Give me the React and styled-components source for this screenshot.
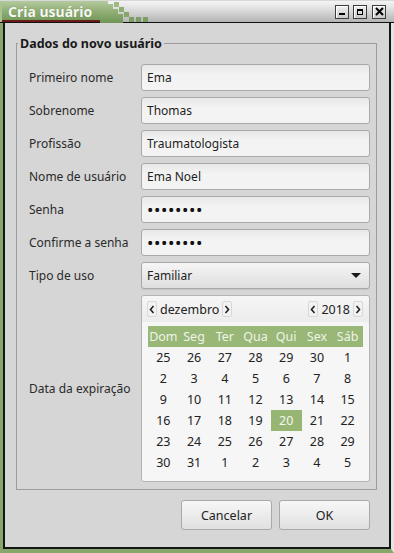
import React from "react";
import styled, { createGlobalStyle } from "styled-components";

const Global = createGlobalStyle`
  html, body { margin: 0; padding: 0; background: #d6d6d6; }
  body { font-family: "Noto Sans", "DejaVu Sans", sans-serif; font-size: 12px; color: #222; }
  * { box-sizing: border-box; }
`;

const Window = styled.div`
  width: 394px;
  height: 553px;
  display: flex;
  flex-direction: column;
  background: #d6d6d6;
  overflow: hidden;
`;

const TitleBar = styled.div`
  height: 23px;
  display: flex;
  align-items: stretch;
  background: linear-gradient(#f4f4f4 0%, #e4e4e4 30%, #b4b4b4 100%);
  border-top: 1px solid #d8d8d8;
  border-bottom: 1px solid #111;
`;

const TitleTab = styled.div`
  width: 100px;
  display: flex;
  align-items: center;
  padding-left: 6px;
  background: linear-gradient(#b4ca9f 0%, #93b078 45%, #6f9655 100%);
  border-left: 2px solid #a9c393;
  box-shadow: inset 0 -2px 0 #6a1c18;
  color: #f6f8f3;
  font-weight: 700;
  font-size: 14px;
  text-shadow: 0 0 1px rgba(40, 60, 30, 0.4);
`;

const Stairs = styled.svg`
  width: 50px;
  height: 22px;
  flex: none;
`;

const TitleSpacer = styled.div`
  flex: 1;
`;

const WinButtons = styled.div`
  display: flex;
  align-items: center;
  gap: 4px;
  padding-right: 8px;
`;

const WinBtn = styled.div`
  width: 14px;
  height: 14px;
  display: flex;
  align-items: center;
  justify-content: center;
  border: 1px solid #3c3c3c;
  background: linear-gradient(#f0f0f0, #c9c9c9);
  box-shadow: inset 1px 1px 0 #fff;
  margin-left: ${(p) => p.$gap || 0}px;
`;

const Frame = styled.div`
  flex: 1;
  display: flex;
  border-left: 3px solid #86a66c;
  border-bottom: 4px solid #86a66c;
  border-right: 3px solid #e4e4e4;
`;

const Body = styled.div`
  flex: 1;
  display: flex;
  flex-direction: column;
  border-left: 2px solid #151515;
  border-right: 2px solid #151515;
  border-bottom: 2px solid #151515;
  padding: 12px 12px 0 11px;
  background: #d6d6d6;
`;

const Group = styled.fieldset`
  margin: 0;
  border: 1px solid #9c9c9c;
  padding: 12px 6px 7px 12px;
  min-width: 0;
`;

const Legend = styled.legend`
  margin-left: -11px;
  padding: 0 2px;
  font-weight: 700;
  font-size: 12.5px;
  line-height: 17px;
  color: #1a1a1a;
`;

const FormGrid = styled.div`
  display: grid;
  grid-template-columns: 112px 1fr;
  row-gap: 6px;
  align-items: center;
`;

const Label = styled.div`
  font-size: 12px;
  color: #2a2a2a;
`;

const Input = styled.div`
  height: 27px;
  display: flex;
  align-items: center;
  padding-left: 5px;
  border: 1px solid #a9a9a9;
  border-radius: 3px;
  background: linear-gradient(#e8e8e8, #f3f3f3 40%, #f3f3f3);
  font-size: 12px;
  color: #1e1e1e;
`;

const Dots = styled.span`
  font-size: 17px;
  letter-spacing: 0.6px;
  color: #111;
  line-height: 1;
`;

const Combo = styled(Input)`
  justify-content: space-between;
  padding-right: 8px;
  background: linear-gradient(#f6f6f6, #dedede);
  box-shadow: 0 1px 0 rgba(0,0,0,0.08);
`;

const Arrow = styled.div`
  width: 0;
  height: 0;
  border-left: 5px solid transparent;
  border-right: 5px solid transparent;
  border-top: 5px solid #1a1a1a;
`;

const Calendar = styled.div`
  border: 1px solid #b3b3b3;
  border-radius: 3px;
  background: #f6f6f6;
  display: flex;
  flex-direction: column;
  padding-bottom: 8px;
`;

const CalNav = styled.div`
  height: 26px;
  display: flex;
  align-items: center;
  padding: 0 6px 0 5px;
  background: linear-gradient(#f6f6f6, #ececec);
  border-radius: 3px 3px 0 0;
`;

const NavGroup = styled.div`
  display: flex;
  align-items: center;
  gap: 2px;
`;

const NavBtn = styled.div`
  width: 10px;
  height: 16px;
  display: flex;
  align-items: center;
  justify-content: center;
  border: 1px solid #d8d8d8;
  border-radius: 2px;
  background: #f2f2f2;
`;

const NavText = styled.span`
  font-size: 12.5px;
  color: #222;
  padding: 0 1px;
`;

const NavSpacer = styled.div`
  flex: 1;
`;

const DayGrid = styled.div`
  margin: 4px 6px 0;
  display: grid;
  grid-template-columns: repeat(7, 1fr);
  grid-auto-rows: 21px;
`;

const HeadCell = styled.div`
  background: #99b777;
  color: #eef3e8;
  font-size: 12.5px;
  display: flex;
  align-items: center;
  justify-content: center;
`;

const DayCell = styled.div`
  display: flex;
  align-items: center;
  justify-content: center;
  font-size: 12.5px;
  color: ${(p) => (p.$sel ? "#f4f8ef" : "#222")};
  background: ${(p) => (p.$sel ? "#97b573" : "transparent")};
`;

const ButtonRow = styled.div`
  display: flex;
  justify-content: flex-end;
  gap: 7px;
  margin-top: 10px;
  padding-right: 7px;
`;

const Button = styled.div`
  width: 91px;
  height: 30px;
  display: flex;
  align-items: center;
  justify-content: center;
  border: 1px solid #a9a9a9;
  border-radius: 3px;
  background: linear-gradient(#f7f7f7, #e0e0e0);
  font-size: 12.5px;
  color: #222;
`;

const Chevron = ({ dir }) => (
  <svg width="6" height="9" viewBox="0 0 6 9">
    <polyline
      points={dir === "left" ? "4.5,1 1.5,4.5 4.5,8" : "1.5,1 4.5,4.5 1.5,8"}
      fill="none"
      stroke="#222"
      strokeWidth="1.6"
    />
  </svg>
);

const headers = ["Dom", "Seg", "Ter", "Qua", "Qui", "Sex", "Sáb"];
const days = [
  25, 26, 27, 28, 29, 30, 1,
  2, 3, 4, 5, 6, 7, 8,
  9, 10, 11, 12, 13, 14, 15,
  16, 17, 18, 19, 20, 21, 22,
  23, 24, 25, 26, 27, 28, 29,
  30, 31, 1, 2, 3, 4, 5,
];

const fields = [
  ["Primeiro nome", "Ema"],
  ["Sobrenome", "Thomas"],
  ["Profissão", "Traumatologista"],
  ["Nome de usuário", "Ema Noel"],
];

export default function App() {
  return (
    <>
      <Global />
      <Window>
        <TitleBar>
          <TitleTab>Cria usuário</TitleTab>
          <Stairs viewBox="0 0 50 22">
            <defs>
              <linearGradient id="g" x1="0" y1="0" x2="0" y2="1">
                <stop offset="0" stopColor="#b4ca9f" />
                <stop offset="0.45" stopColor="#93b078" />
                <stop offset="1" stopColor="#6f9655" />
              </linearGradient>
            </defs>
            <polygon points="0,0 8,0 8,3 13,3 13,8 18,8 18,13 23,13 23,22 0,22" fill="url(#g)" />
            <rect x="14" y="1" width="5" height="5" fill="#9dba83" />
            <rect x="19" y="6" width="5" height="5" fill="#8fae74" />
            <rect x="24" y="11" width="5" height="5" fill="#86a66c" />
            <rect x="29" y="16" width="5" height="5" fill="#7c9e62" />
            <rect x="36" y="16" width="5" height="5" fill="#7c9e62" />
            <rect x="43" y="16" width="5" height="5" fill="#7c9e62" />
          </Stairs>
          <TitleSpacer />
          <WinButtons>
            <WinBtn>
              <svg width="8" height="8" viewBox="0 0 8 8"><rect x="1" y="5" width="6" height="2" fill="#000" /></svg>
            </WinBtn>
            <WinBtn>
              <svg width="8" height="8" viewBox="0 0 8 8"><rect x="1.5" y="1.5" width="5" height="5" fill="none" stroke="#000" strokeWidth="1" /><rect x="1" y="1" width="6" height="2" fill="#000" /></svg>
            </WinBtn>
            <WinBtn $gap={1}>
              <svg width="9" height="9" viewBox="0 0 9 9"><path d="M1,1 L8,8 M8,1 L1,8" stroke="#000" strokeWidth="2" /></svg>
            </WinBtn>
          </WinButtons>
        </TitleBar>
        <Frame>
          <Body>
            <Group>
              <Legend>Dados do novo usuário</Legend>
              <FormGrid>
                {fields.map(([l, v]) => (
                  <React.Fragment key={l}>
                    <Label>{l}</Label>
                    <Input>{v}</Input>
                  </React.Fragment>
                ))}
                <Label>Senha</Label>
                <Input><Dots>••••••••</Dots></Input>
                <Label>Confirme a senha</Label>
                <Input><Dots>••••••••</Dots></Input>
                <Label>Tipo de uso</Label>
                <Combo>
                  <span>Familiar</span>
                  <Arrow />
                </Combo>
                <Label>Data da expiração</Label>
                <Calendar>
                  <CalNav>
                    <NavGroup>
                      <NavBtn><Chevron dir="left" /></NavBtn>
                      <NavText>dezembro</NavText>
                      <NavBtn><Chevron dir="right" /></NavBtn>
                    </NavGroup>
                    <NavSpacer />
                    <NavGroup>
                      <NavBtn><Chevron dir="left" /></NavBtn>
                      <NavText>2018</NavText>
                      <NavBtn><Chevron dir="right" /></NavBtn>
                    </NavGroup>
                  </CalNav>
                  <DayGrid>
                    {headers.map((h) => (
                      <HeadCell key={h}>{h}</HeadCell>
                    ))}
                    {days.map((d, i) => (
                      <DayCell key={i} $sel={i === 25}>{d}</DayCell>
                    ))}
                  </DayGrid>
                </Calendar>
              </FormGrid>
            </Group>
            <ButtonRow>
              <Button>Cancelar</Button>
              <Button>OK</Button>
            </ButtonRow>
          </Body>
        </Frame>
      </Window>
    </>
  );
}
